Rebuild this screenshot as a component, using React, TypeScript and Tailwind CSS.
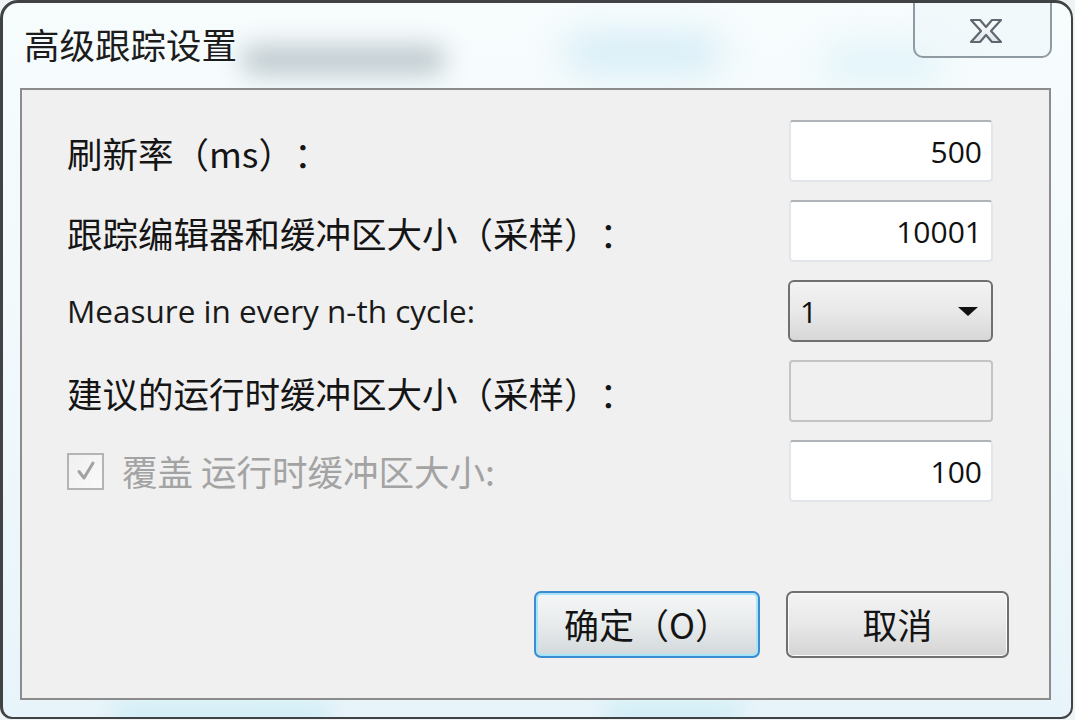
import React from "react";

const cjk = { fontFamily: '"Noto Sans CJK SC", "Noto Sans", sans-serif' };
const latin = { fontFamily: '"Open Sans", "Noto Sans", sans-serif' };

function TextBox({ value, disabled }: { value?: string; disabled?: boolean }) {
  if (disabled) {
    return (
      <div className="w-[204px] h-[62px] rounded-[4px] border-2 border-[#c4c4c4] bg-[#f0f0f0]" />
    );
  }
  return (
    <div
      className="w-[204px] h-[62px] rounded-[4px] border-2 border-[#e2e6ea] border-t-[#b0b3b8] bg-white flex items-center justify-end pr-[9px] text-[30px] text-[#111]"
      style={latin}
    >
      {value}
    </div>
  );
}

function Combo() {
  return (
    <div className="w-[205px] h-[62px] rounded-[6px] border-2 border-[#707070] bg-gradient-to-b from-[#f3f3f3] via-[#e9e9e9] to-[#d7d7d7] flex items-center pl-[10px] pr-[12px]">
      <span className="text-[30px] text-[#111]" style={latin}>
        1
      </span>
      <svg className="ml-auto" width="22" height="11" viewBox="0 0 22 11">
        <polygon points="1,1 21,1 11,10" fill="#111" />
      </svg>
    </div>
  );
}

function Row({ label, children, isLatin }: { label: string; children: React.ReactNode; isLatin?: boolean }) {
  return (
    <div className="flex items-center justify-between h-[62px]">
      <span
        className={isLatin ? "text-[31.5px] text-[#1a1a1a]" : "text-[35.5px] text-[#151515] pt-[4px]"}
        style={isLatin ? latin : cjk}
      >
        {label}
      </span>
      {children}
    </div>
  );
}

export default function App() {
  return (
    <div className="w-[1075px] h-[720px] bg-[#eef3f5] overflow-hidden [text-spacing-trim:space-all]">
      <div className="relative w-[1073px] h-[719px] border-[3px] border-r-2 border-b-2 border-[#404244] rounded-t-[18px] rounded-b-[12px] bg-gradient-to-b from-[#f7fcfd] via-[#f1f9fc] to-[#e7f4f9] flex flex-col overflow-hidden">
        {/* glass reflections */}
        <div className="absolute left-[238px] top-[42px] w-[205px] h-[30px] rounded-full bg-[#7f8f99] opacity-45 blur-[12px]" />
        <div className="absolute left-[560px] top-[30px] w-[160px] h-[40px] rounded-full bg-[#bfe3f2] opacity-60 blur-[18px]" />
        <div className="absolute left-[820px] top-[40px] w-[120px] h-[40px] rounded-full bg-[#d2eef7] opacity-60 blur-[18px]" />
        <div className="absolute left-[110px] top-[700px] w-[220px] h-[20px] rounded-full bg-[#c5eaf5] opacity-70 blur-[10px]" />
        <div className="absolute left-[600px] top-[700px] w-[140px] h-[20px] rounded-full bg-[#c5eaf5] opacity-70 blur-[10px]" />

        {/* title bar */}
        <div className="relative h-[85px] flex items-start shrink-0">
          <div className="pl-[21px] pt-[21px] text-[35.5px] leading-[40px] text-[#1c1c1c]" style={cjk}>
            高级跟踪设置
          </div>
          <div className="ml-auto mr-[19px] w-[139px] h-[55px] border-2 border-t-0 border-[#8f9ba3] rounded-b-[10px] bg-[#eef7fa]/60 flex items-center justify-center pl-[6px] pt-[2px]">
            <svg width="36" height="28" viewBox="0 0 36 28">
              <defs>
                <linearGradient id="xg" x1="0" y1="0" x2="0" y2="1">
                  <stop offset="0" stopColor="#ffffff" />
                  <stop offset="1" stopColor="#dfe5e9" />
                </linearGradient>
              </defs>
              <polygon
                points="3,3 12,3 18,10 24,3 33,3 23,14 33,25 24,25 18,18 12,25 3,25 13,14"
                fill="url(#xg)"
                stroke="#5d6870"
                strokeWidth="2.2"
                strokeLinejoin="round"
              />
            </svg>
          </div>
        </div>

        {/* client area */}
        <div className="relative flex-1 ml-[17px] mr-[20px] mb-[17px] border-2 border-[#8c8c8c] bg-[#f0f0f0] flex flex-col pl-[45px] pr-[56px] pt-[30px]">
          <div className="flex flex-col gap-[18px]">
            <Row label="刷新率（ms）：">
              <TextBox value="500" />
            </Row>
            <Row label="跟踪编辑器和缓冲区大小（采样）：">
              <TextBox value="10001" />
            </Row>
            <Row label="Measure in every n-th cycle:" isLatin>
              <Combo />
            </Row>
            <Row label="建议的运行时缓冲区大小（采样）：">
              <TextBox disabled />
            </Row>
            <div className="flex items-center justify-between h-[62px]">
              <div className="flex items-center">
                <div className="w-[37px] h-[37px] border-2 border-[#b4b4b4] bg-gradient-to-br from-[#f0f0f0] to-[#fafafa] flex items-center justify-center">
                  <svg width="24" height="24" viewBox="0 0 24 24">
                    <path d="M5 12.5 L10 19 L19 4" fill="none" stroke="#a2a2a2" strokeWidth="3" strokeLinecap="round" strokeLinejoin="round" />
                  </svg>
                </div>
                <span className="ml-[18px] text-[35.5px] text-[#a3a3a3]" style={cjk}>
                  覆盖 运行时缓冲区大小:
                </span>
              </div>
              <TextBox value="100" />
            </div>
          </div>

          {/* buttons */}
          <div className="mt-auto mb-[40px] -mr-[16px] flex justify-end gap-[26px]">
            <button className="w-[226px] h-[67px] rounded-[7px] border-2 border-[#3c8ccf] shadow-[inset_0_0_0_2px_#a6e4f7] bg-gradient-to-b from-[#f4f6f7] via-[#e8ebec] to-[#d2d8db] flex items-center justify-center text-[35px] text-[#141414]" style={cjk}>
              确定（O）
            </button>
            <button className="w-[223px] h-[67px] rounded-[7px] border-2 border-[#707070] shadow-[inset_0_0_0_1px_#fbfbfb] bg-gradient-to-b from-[#f3f3f3] via-[#e8e8e8] to-[#d4d4d4] flex items-center justify-center text-[35px] text-[#141414]" style={cjk}>
              取消
            </button>
          </div>
        </div>
      </div>
    </div>
  );
}
